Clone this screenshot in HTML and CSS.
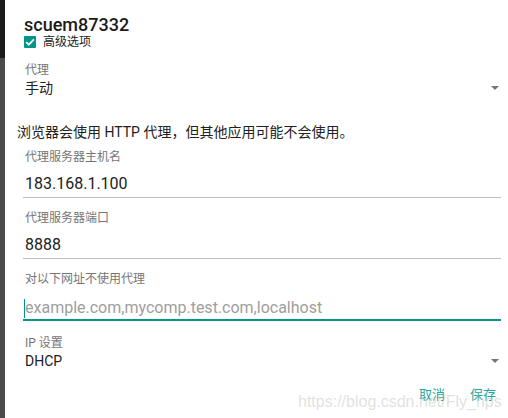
FILE: index.html
```html
<!DOCTYPE html>
<html lang="zh-CN">
<head>
<meta charset="utf-8">
<title>scuem87332</title>
<link rel="stylesheet" href="styles.css">
</head>
<body>
<div class="screen">
  <div class="edge"><div class="edge-top"></div><div class="edge-bottom"></div></div>
  <div class="dialog">
    <div class="title">scuem87332</div>
    <div class="check">
      <span class="box"><svg viewBox="0 0 12 12" width="12" height="12"><path d="M2.2 6.2 L4.8 8.7 L9.9 3.4" fill="none" stroke="#fff" stroke-width="1.7"/></svg></span>
      <span class="check-text">高级选项</span>
    </div>
    <div class="spinner">
      <div class="label">代理</div>
      <div class="select"><span>手动</span><span class="caret"></span></div>
    </div>
    <p class="note">浏览器会使用 HTTP 代理<span class="punct">，</span>但其他应用可能不会使用。</p>
    <div class="field">
      <div class="label">代理服务器主机名</div>
      <div class="value">183.168.1.100</div>
    </div>
    <div class="field">
      <div class="label">代理服务器端口</div>
      <div class="value">8888</div>
    </div>
    <div class="field focused">
      <div class="label">对以下网址不使用代理</div>
      <div class="value placeholder"><span class="cursor"></span>example.com,mycomp.test.com,localhost</div>
    </div>
    <div class="spinner ip">
      <div class="label">IP 设置</div>
      <div class="select"><span>DHCP</span><span class="caret"></span></div>
    </div>
    <div class="actions">
      <span class="btn">取消</span>
      <span class="btn">保存</span>
    </div>
    <div class="watermark">https://blog.csdn.net/Fly_hps</div>
  </div>
</div>
</body>
</html>
```
FILE: styles.css
```css
html, body {
  margin: 0;
  padding: 0;
  background: #fff;
}
body {
  font-family: Roboto, "Noto Sans CJK SC", sans-serif;
  color: #212121;
}
.screen {
  display: flex;
  width: 508px;
  height: 418px;
  overflow: hidden;
}
.edge {
  width: 5px;
  display: flex;
  flex-direction: column;
  flex: none;
}
.edge-top {
  height: 58px;
  background: #1b1b1b;
}
.edge-bottom {
  flex: 1;
  background: #4a4a4a;
}
.dialog {
  position: relative;
  flex: 1;
  padding: 15px 7px 0 12px;
  box-sizing: border-box;
}
.title {
  margin-left: 7px;
  font-size: 18px;
  font-weight: 500;
  line-height: 20px;
  color: #1a1a1a;
}
.check {
  margin-left: 7px;
  height: 14px;
  display: flex;
  align-items: center;
}
.box {
  width: 12px;
  height: 12px;
  background: #009688;
  border-radius: 1px;
  display: flex;
}
.check-text {
  margin-left: 7px;
  font-size: 12px;
  line-height: 14px;
  color: #212121;
}
.label {
  font-size: 12px;
  line-height: 16px;
  color: #757575;
}
.spinner {
  margin: 13px 0 0 6px;
  padding-left: 2px;
}
.select {
  display: flex;
  justify-content: space-between;
  align-items: center;
  font-size: 14px;
  line-height: 20px;
  color: #212121;
}
.caret {
  width: 0;
  height: 0;
  border-left: 4px solid transparent;
  border-right: 4px solid transparent;
  border-top: 4px solid #757575;
  margin-right: 2px;
}
.note {
  margin: 23px 0 0;
  font-size: 14px;
  line-height: 20px;
  color: #212121;
}
.punct {
  font-family: "Noto Sans CJK TC", "Noto Sans CJK SC", sans-serif;
}
.field {
  margin: 7px 0 0 6px;
  padding-left: 2px;
  border-bottom: 1px solid #bdbdbd;
}
.field + .field {
  margin-top: 12px;
}
.field .value {
  margin-top: 9px;
  padding-bottom: 3px;
  font-size: 16px;
  line-height: 20px;
  color: #212121;
}
.field.focused {
  border-bottom: 2px solid #009688;
}
.field .value.placeholder {
  color: #9e9e9e;
  display: flex;
  align-items: center;
  padding-top: 2px;
  padding-bottom: 1px;
}
.cursor {
  width: 1px;
  height: 19px;
  background: #009688;
  margin-left: -1px;
}
.spinner.ip {
  margin-top: 14px;
}
.actions {
  margin-top: 16px;
  display: flex;
  justify-content: flex-end;
  gap: 25px;
  padding-right: 5px;
}
.btn {
  font-size: 13px;
  line-height: 16px;
  color: #26a69a;
}
.watermark {
  position: absolute;
  left: 293px;
  top: 392px;
  font-family: "Liberation Sans", Arial, sans-serif;
  font-size: 16px;
  line-height: 20px;
  color: rgba(200, 200, 200, 0.55);
  white-space: nowrap;
}
```
